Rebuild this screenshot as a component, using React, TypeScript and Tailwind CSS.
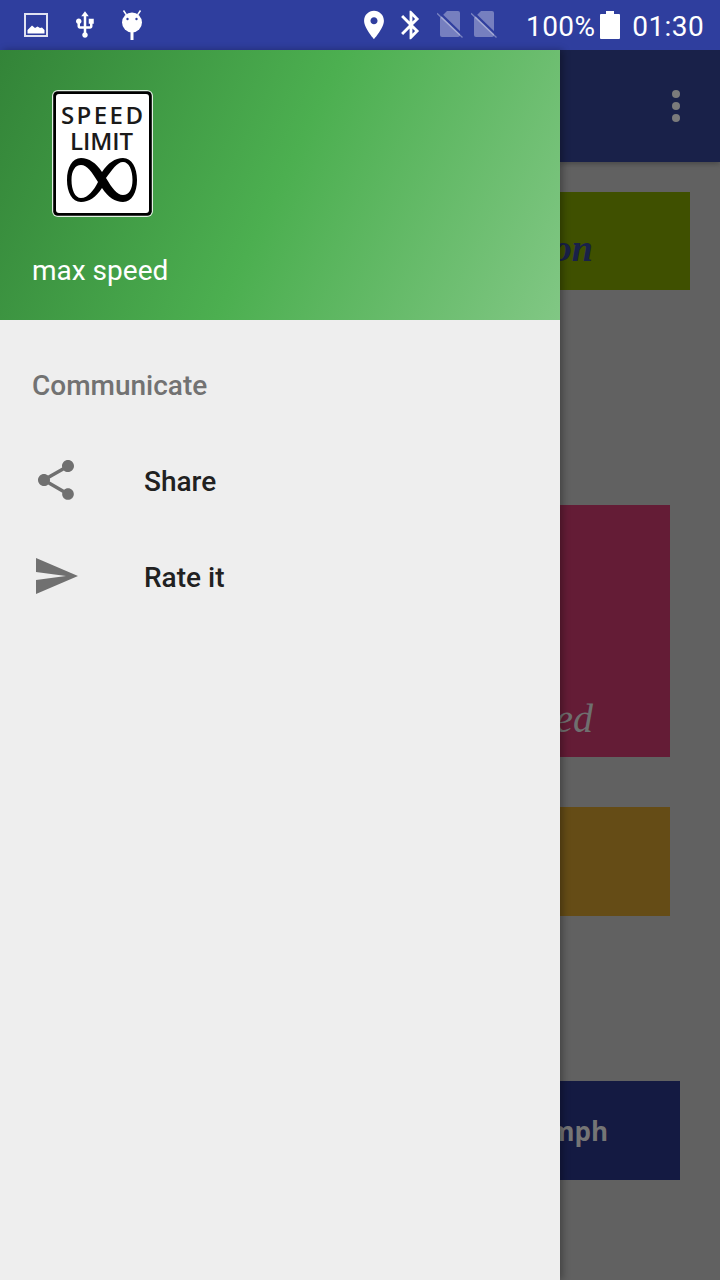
import React from "react";

const roboto = "font-['Roboto',sans-serif]";

function SimOff({ className }: { className: string }) {
  return (
    <svg viewBox="0 0 26 30" className={className} fill="none">
      <path d="M10 1 H21 a2 2 0 0 1 2 2 V25 a2 2 0 0 1 -2 2 H5 a2 2 0 0 1 -2 -2 V8 Z" fill="#fff" fillOpacity="0.34" />
      <path d="M1.5 1.8 L26 25.5" stroke="#2f3e9e" strokeWidth="2.2" />
      <path d="M0 3.3 L25.5 27.5" stroke="#fff" strokeOpacity="0.36" strokeWidth="1.2" />
    </svg>
  );
}

function StatusBar() {
  return (
    <div className={`h-[50px] bg-[#2f3e9e] flex items-center text-white text-[28px] leading-none tracking-[0.4px] ${roboto}`}>
      <svg viewBox="0 0 24 24" className="ml-[24px] w-[24px] h-[24px]" fill="none">
        <rect x="1" y="1" width="22" height="22" stroke="#fff" strokeOpacity="0.85" strokeWidth="2" />
        <path d="M3.5 20.5 V17 L8 12.5 L11 15 L13.5 13.5 L16 15 L18 14.5 L20.5 17 V20.5 Z" fill="#fff" />
      </svg>
      <svg viewBox="0 0 24 24" className="ml-[22px] w-[30px] h-[30px]" fill="#fff">
        <path d="M15 7v4h1v2h-3V5h2l-3-4-3 4h2v8H8v-2.07c.7-.37 1.2-1.08 1.2-1.93 0-1.21-.99-2.2-2.2-2.2-1.21 0-2.2.99-2.2 2.2 0 .85.5 1.56 1.2 1.93V13c0 1.11.89 2 2 2h3v3.05c-.71.37-1.2 1.1-1.2 1.95 0 1.22.99 2.2 2.2 2.2 1.21 0 2.2-.98 2.2-2.2 0-.85-.49-1.58-1.2-1.95V15h3c1.11 0 2-.89 2-2v-2h1V7h-4z" />
      </svg>
      <svg viewBox="0 0 24 32" className="ml-[20px] w-[24px] h-[32px]" fill="none">
        <path d="M3.5 1.5 L6.5 6 M20.5 1.5 L17.5 6" stroke="#fff" strokeWidth="1.5" />
        <circle cx="12" cy="13.5" r="10" fill="#fff" />
        <circle cx="7.5" cy="10" r="1.2" fill="#2f3e9e" />
        <circle cx="16.5" cy="10" r="1.2" fill="#2f3e9e" />
        <rect x="10.5" y="23" width="3" height="8" fill="#fff" />
      </svg>
      <svg viewBox="0 0 24 24" className="ml-[213px] w-[34px] h-[34px]" fill="#fff">
        <path d="M12 2C8.13 2 5 5.13 5 9c0 5.25 7 13 7 13s7-7.75 7-13c0-3.87-3.13-7-7-7zm0 9.5c-1.38 0-2.5-1.12-2.5-2.5s1.12-2.5 2.5-2.5 2.5 1.12 2.5 2.5-1.12 2.5-2.5 2.5z" />
      </svg>
      <svg viewBox="0 0 24 24" className="ml-[3px] w-[34px] h-[34px]" fill="#fff">
        <path d="M17.71 7.71L12 2h-1v7.59L6.41 5 5 6.41 10.59 12 5 17.59 6.41 19 11 14.41V22h1l5.71-5.71-4.3-4.29 4.3-4.29zM13 5.83l1.88 1.88L13 9.59V5.83zm1.88 10.46L13 18.17v-3.76l1.88 1.88z" />
      </svg>
      <SimOff className="ml-[9px] w-[26px] h-[30px]" />
      <SimOff className="ml-[8px] w-[26px] h-[30px]" />
      <span className="ml-[29px] pt-[4px]">100%</span>
      <svg viewBox="0 0 20 28" className="ml-[5px] w-[20px] h-[28px]" fill="#fff">
        <path d="M6 0h8v3h5a1 1 0 0 1 1 1v23a1 1 0 0 1-1 1H1a1 1 0 0 1-1-1V4a1 1 0 0 1 1-1h5z" />
      </svg>
      <span className="ml-[12px] pt-[4px]">01:30</span>
    </div>
  );
}

function SpeedSign() {
  return (
    <svg viewBox="0 0 102 128" className="w-[102px] h-[128px]">
      <rect x="0" y="0" width="101" height="127" rx="6" fill="#fff" fillOpacity="0.85" />
      <rect x="1.2" y="1.2" width="98.6" height="124.6" rx="4.5" fill="#000" />
      <rect x="4" y="4" width="93" height="119" rx="3" fill="#fff" />
      <text x="9" y="34" textLength="82" lengthAdjust="spacing" fontFamily="'Open Sans', sans-serif" fontSize="24" fontWeight="600" fill="#1a1a1a">SPEED</text>
      <text x="18" y="60" textLength="63" lengthAdjust="spacing" fontFamily="'Open Sans', sans-serif" fontSize="24" fontWeight="600" fill="#1a1a1a">LIMIT</text>
      <path
        fillRule="evenodd"
        fill="#000"
        d="M50 82 C44 73 37 68 29 68 C20 68 15 78 15 90 C15 102 20 112 29 112 C37 112 44 107 50 98 C56 107 63 112 71 112 C80 112 85 102 85 90 C85 78 80 68 71 68 C63 68 56 73 50 82 Z M46 92 C40 82 35 75 29 75 C23 75 19.5 81 19.5 90 C19.5 100 23 108 29 108 C36 108 42 100 46 92 Z M54 88 C60 80 65 72 71 72 C77 72 80.5 80 80.5 90 C80.5 99 77 105 71 105 C65 105 60 98 54 88 Z"
      />
    </svg>
  );
}

function MenuRow({ icon, label }: { icon: React.ReactNode; label: string }) {
  return (
    <div className="h-[96px] flex items-center pl-[32px]">
      <svg viewBox="0 0 24 24" className="w-[48px] h-[48px] shrink-0" fill="#707070">
        {icon}
      </svg>
      <span className="ml-[64px] pt-[4px] text-[28px] font-medium text-[#212121]">{label}</span>
    </div>
  );
}

function Drawer() {
  return (
    <div className={`relative z-10 w-[560px] shrink-0 bg-[#eeeeee] shadow-[3px_0_7px_rgba(0,0,0,0.3)] ${roboto}`}>
      <div className="h-[270px] bg-[linear-gradient(115.7deg,#338438_0%,#4caf50_50%,#81c784_100%)] flex flex-col">
        <div className="ml-[52px] mt-[40px]">
          <SpeedSign />
        </div>
        <div className="ml-[32px] mt-[35px] text-[28px] leading-[36px] text-white">max speed</div>
      </div>
      <div className="pl-[32px] pt-[48px] h-[112px] text-[28px] leading-[36px] font-medium text-[#727272]">Communicate</div>
      <MenuRow
        label="Share"
        icon={<path d="M18 16.08c-.76 0-1.44.3-1.96.77L8.91 12.7c.05-.23.09-.46.09-.7s-.04-.47-.09-.7l7.05-4.11c.54.5 1.25.81 2.04.81 1.66 0 3-1.34 3-3s-1.34-3-3-3-3 1.34-3 3c0 .24.04.47.09.7L8.04 9.81C7.5 9.31 6.79 9 6 9c-1.66 0-3 1.34-3 3s1.34 3 3 3c.79 0 1.5-.31 2.04-.81l7.12 4.16c-.05.21-.08.43-.08.65 0 1.61 1.31 2.92 2.92 2.92 1.61 0 2.92-1.31 2.92-2.92s-1.31-2.92-2.92-2.92z" />}
      />
      <MenuRow label="Rate it" icon={<path d="M2.01 21L23 12 2.01 3 2 10l15 2-15 2z" />} />
    </div>
  );
}

function Backdrop() {
  return (
    <div className="w-[160px] shrink-0 overflow-hidden bg-[#616161] flex flex-col">
      <div className="h-[112px] shrink-0 bg-[#192149] shadow-[0_2px_5px_rgba(0,0,0,0.25)] flex flex-col items-end justify-center gap-[4px] pr-[40px]">
        <div className="w-[8px] h-[8px] rounded-full bg-[#7b7b7b]" />
        <div className="w-[8px] h-[8px] rounded-full bg-[#7b7b7b]" />
        <div className="w-[8px] h-[8px] rounded-full bg-[#7b7b7b]" />
      </div>
      <div className="mt-[30px] w-[130px] h-[98px] bg-[#3f5000] flex items-center justify-end pr-[97px]">
        <span className="whitespace-nowrap pt-[14px] text-[38px] font-bold italic text-[#192149] font-['Liberation_Serif',serif]">on</span>
      </div>
      <div className="mt-[215px] w-[110px] h-[252px] bg-[#641c36] flex items-end justify-end pr-[77px] pb-[14px]">
        <span className="whitespace-nowrap text-[40px] leading-[48px] italic text-[#6f6f6f] font-['Liberation_Serif',serif]">speed</span>
      </div>
      <div className="mt-[50px] w-[110px] h-[109px] bg-[#654c16]" />
      <div className="mt-[165px] w-[120px] h-[99px] bg-[#141a42] flex items-center justify-end pr-[72px]">
        <span className="whitespace-nowrap pt-[2px] text-[26px] font-bold text-[#757575] font-['Open_Sans',sans-serif]">0 mph</span>
      </div>
    </div>
  );
}

export default function App() {
  return (
    <div className="w-[720px] h-[1280px] overflow-hidden flex flex-col bg-[#616161]">
      <StatusBar />
      <div className="flex flex-1 min-h-0">
        <Drawer />
        <Backdrop />
      </div>
    </div>
  );
}
